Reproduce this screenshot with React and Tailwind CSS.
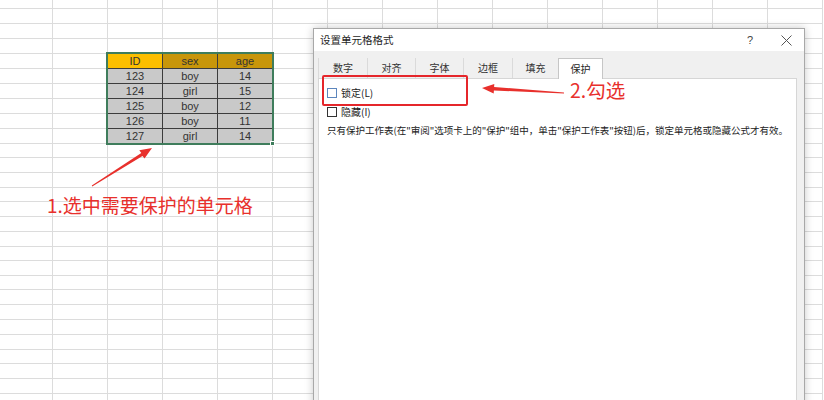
import React from "react";

const lines = [8, 23, 38, 53, 68, 83, 98, 113, 128, 143, 157, 172, 187, 201, 216, 231, 246, 260, 275, 289, 304, 319, 334, 349, 363, 378, 393, 408];
const rowHeights = lines.map((y, i) => (i === 0 ? y + 1 : y - lines[i - 1]));
const colWidths = [53, ...Array(14).fill(55)];

const tableRows = {
  4: ["ID", "sex", "age"],
  5: ["123", "boy", "14"],
  6: ["124", "girl", "15"],
  7: ["125", "boy", "12"],
  8: ["126", "boy", "11"],
  9: ["127", "girl", "14"],
};

const tabs = [
  { label: "数字", w: 49 },
  { label: "对齐", w: 48 },
  { label: "字体", w: 48 },
  { label: "边框", w: 49 },
  { label: "填充", w: 46 },
  { label: "保护", w: 45, active: true },
];

function Cell({ r, c, w, h }) {
  const data = tableRows[r];
  if (data && c >= 2 && c <= 4) {
    const text = data[c - 2];
    let bg = "bg-[#c9c9c9]";
    if (r === 4) bg = c === 2 ? "bg-[#fcbf00]" : "bg-[#c8960a]";
    return (
      <div
        style={{ width: w, height: h }}
        className={`${bg} shrink-0 border-r border-b border-[#3c3c3c] flex items-center justify-center text-[11px] text-[#333] leading-none`}
      >
        {text}
      </div>
    );
  }
  return <div style={{ width: w, height: h }} className="shrink-0 border-r border-b border-[#dcdcdc]" />;
}

function Sheet() {
  return (
    <div className="flex flex-col font-['Liberation_Sans',sans-serif]">
      {rowHeights.map((h, r) => (
        <div key={r} className="flex">
          {colWidths.map((w, c) => (
            <Cell key={c} r={r} c={c} w={w} h={h} />
          ))}
        </div>
      ))}
    </div>
  );
}

function Checkbox({ label, focused }) {
  return (
    <div className="h-[19px] flex items-center">
      <div className={`w-[10px] h-[10px] bg-white border ${focused ? "border-[#5c86bd]" : "border-[#333]"}`} />
      <span className="ml-[4px] text-[10px] text-[#222] leading-none">{label}</span>
    </div>
  );
}

function Dialog() {
  return (
    <div className="absolute left-[313px] top-[28px] w-[492px] h-[390px] bg-[#f0f0f0] border border-[#a8a8a8] shadow-[0_0_8px_rgba(0,0,0,0.22)] flex flex-col font-['Noto_Sans_CJK_SC',sans-serif] text-[#1e1e1e]">
      <div className="h-[22px] bg-white flex items-center shrink-0">
        <span className="pl-[6px] text-[10.5px] leading-none flex-1">设置单元格格式</span>
        <div className="w-[36px] h-full flex items-center justify-center text-[11px] text-[#444] font-['Liberation_Sans',sans-serif]">?</div>
        <div className="w-[36px] h-full flex items-center justify-center">
          <svg width="11" height="11" viewBox="0 0 11 11">
            <path d="M0.5 0.5 L10.5 10.5 M10.5 0.5 L0.5 10.5" stroke="#555" strokeWidth="1" fill="none" />
          </svg>
        </div>
      </div>
      <div className="pt-[7px] pl-[4px] flex shrink-0">
        {tabs.map((t) =>
          t.active ? (
            <div
              key={t.label}
              style={{ width: t.w }}
              className="h-[21px] -mb-px relative z-10 bg-white border border-b-0 border-[#c6c6c6] flex items-center justify-center text-[10px] leading-none"
            >
              {t.label}
            </div>
          ) : (
            <div
              key={t.label}
              style={{ width: t.w }}
              className="h-[20px] border-l border-[#dadada] flex items-center justify-center text-[10px] leading-none text-[#333]"
            >
              {t.label}
            </div>
          )
        )}
      </div>
      <div className="ml-[4px] mr-[7px] flex-1 bg-white border border-[#d6d6d6] pt-[4px] pl-[8px]">
        <Checkbox label="锁定(L)" focused />
        <Checkbox label="隐藏(I)" />
        <div className="h-[20px] flex items-center text-[9.5px] leading-none text-[#222] whitespace-nowrap">
          只有保护工作表(在"审阅"选项卡上的"保护"组中，单击"保护工作表"按钮)后，锁定单元格或隐藏公式才有效。
        </div>
      </div>
    </div>
  );
}

function Annotations() {
  return (
    <>
      <div className="absolute left-[106px] top-[52px] w-[168px] h-[93px] border-2 border-[#3f7d5c] pointer-events-none" />
      <div className="absolute left-[270px] top-[141px] w-[5px] h-[5px] bg-[#3f7d5c] border border-white" />
      <div className="absolute left-[322px] top-[75px] w-[146px] h-[31px] border-2 border-[#e5262b] rounded-[2px] z-20" />
      <svg className="absolute left-0 top-0 z-20 pointer-events-none" width="824" height="400">
        <polygon
          points="92.2,186.4 142.5,155.9 144.5,158.6 152,148 139.3,150.3 141.3,153.0 91.8,185.6"
          fill="#e8302c"
        />
        <polygon
          points="564,92.4 494.1,87.0 494.3,84.0 482,88 493.7,93.4 493.9,90.4 564,93.6"
          fill="#e8302c"
        />
      </svg>
      <div className="absolute left-[570px] top-[80px] z-20 text-[19.5px] leading-none text-[#e8302c] font-['Noto_Sans_CJK_SC',sans-serif]">
        2.勾选
      </div>
      <div className="absolute left-[47px] top-[195px] text-[19px] leading-none text-[#e8302c] font-['Noto_Sans_CJK_SC',sans-serif]">
        1.选中需要保护的单元格
      </div>
    </>
  );
}

export default function App() {
  return (
    <div className="relative w-[824px] h-[400px] overflow-hidden bg-white">
      <Sheet />
      <Dialog />
      <Annotations />
    </div>
  );
}
